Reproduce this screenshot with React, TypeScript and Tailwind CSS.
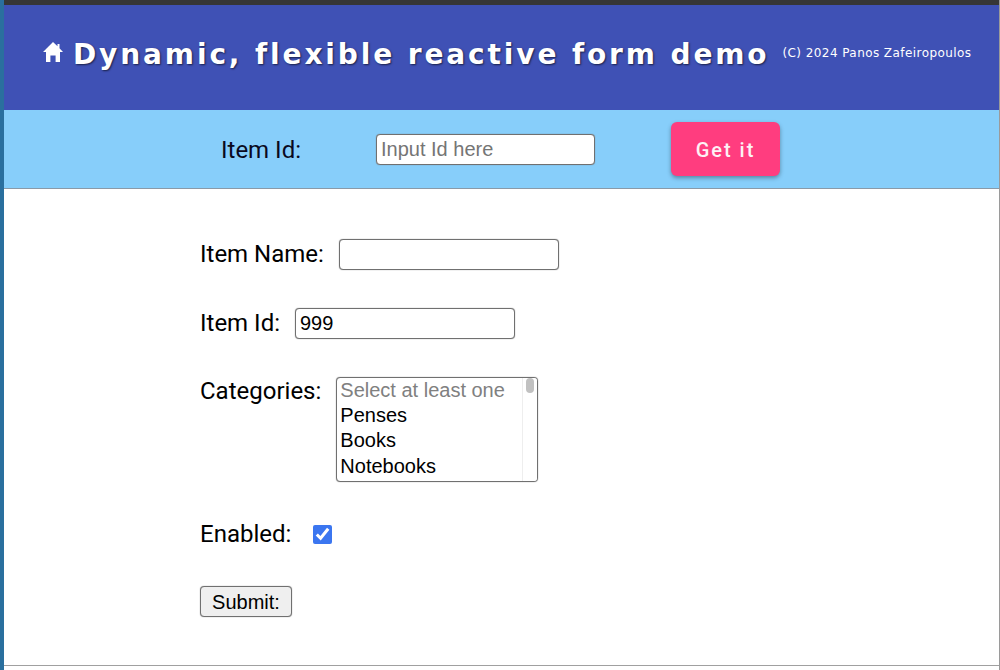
import { useState } from 'react';

const fieldCls =
  "h-[31px] rounded-[4px] border border-[#707070] bg-white px-[4px] text-[20px] text-black font-['Liberation_Sans',sans-serif] shadow-[0_0_1px_#767676] outline-none placeholder:text-[#757575]";

const categories = ['Penses', 'Books', 'Notebooks'];

function HomeIcon() {
  return (
    <svg viewBox="0 0 20 20" className="h-[20px] w-[20px] fill-white">
      <path d="M10 0 L14.5 4.2 V2 H16.5 V6.2 L20 10 H17 V20 H12.6 V13.5 H7.4 V20 H3 V10 H0 Z" />
    </svg>
  );
}

export default function App() {
  const [enabled, setEnabled] = useState(true);

  return (
    <div className="flex h-[670px] w-[1000px] flex-col overflow-hidden border-l-[4px] border-r border-l-[#2a6f9e] border-r-[#9a9a9a] bg-white font-['Roboto',sans-serif]">
      <div className="h-[5px] shrink-0 bg-[#363636]" />

      <header className="flex h-[105px] shrink-0 items-center bg-[#3f51b5] pb-[5px] pl-[39px] text-white">
        <div className="mb-[6px]">
          <HomeIcon />
        </div>
        <h1 className="ml-[10px] text-[28px] font-bold tracking-[2.88px] whitespace-nowrap [text-shadow:1px_1px_2px_rgba(0,0,0,0.6)] font-['DejaVu_Sans',sans-serif]">
          Dynamic, flexible reactive form demo
        </h1>
        <span className="mb-[4px] ml-[13px] text-[12px] tracking-[0.43px] whitespace-nowrap font-['DejaVu_Sans',sans-serif]">
          (C) 2024 Panos Zafeiropoulos
        </span>
      </header>

      <div className="flex h-[79px] shrink-0 items-center border-b border-[#8a9aa8] bg-[#87cefa] pl-[217px]">
        <label className="w-[155px] pt-[2px] text-[24px] text-[#0a0a1e]">Item Id:</label>
        <input className={`${fieldCls} w-[219px]`} placeholder="Input Id here" />
        <button className="ml-[76px] h-[54px] w-[109px] rounded-[6px] bg-[#ff3d7f] pt-[2px] text-[20px] font-medium tracking-[2px] text-[#fdf1f5] shadow-[0_2px_4px_rgba(0,0,0,0.35)]">
          Get it
        </button>
      </div>

      <form className="mb-[4px] flex grow flex-col items-start border-b border-[#a0a0a0] pl-[196px] pt-[50px] text-[24px] text-black">
        <div className="flex h-[31px] items-center">
          <label className="pb-[2px]">Item Name:</label>
          <input className={`${fieldCls} ml-[15px] w-[220px]`} />
        </div>

        <div className="mt-[38px] flex h-[31px] items-center">
          <label className="pb-[2px]">Item Id:</label>
          <input className={`${fieldCls} ml-[15px] w-[220px]`} defaultValue="999" />
        </div>

        <div className="mt-[38px] flex items-start">
          <label className="leading-[28px]">Categories:</label>
          <div className="ml-[15px] flex h-[105px] w-[202px] overflow-hidden rounded-[4px] border border-[#707070] bg-white text-[20px] leading-[25.5px] shadow-[0_0_1px_#767676] font-['Liberation_Sans',sans-serif]">
            <ul className="grow pl-[3px]">
              <li className="text-[#808080]">Select at least one</li>
              {categories.map((c) => (
                <li key={c} className="-translate-y-px">{c}</li>
              ))}
            </ul>
            <div className="flex w-[15px] justify-center border-l border-[#eeeeee] bg-white">
              <div className="h-[15px] w-[8px] rounded-[4px] bg-[#c1c1c1]" />
            </div>
          </div>
        </div>

        <div className="mt-[37px] flex h-[30px] items-center">
          <label>Enabled:</label>
          <input
            type="checkbox"
            checked={enabled}
            onChange={(e) => setEnabled(e.target.checked)}
            className="ml-[22px] h-[19px] w-[19px] accent-[#3b76f0]"
          />
        </div>

        <button
          type="button"
          className="mt-[37px] h-[31px] w-[92px] rounded-[4px] border border-[#707070] bg-[#efefef] pb-[4px] text-[20px] shadow-[0_0_1px_#767676] font-['Liberation_Sans',sans-serif]"
        >
          Submit:
        </button>
      </form>
    </div>
  );
}
